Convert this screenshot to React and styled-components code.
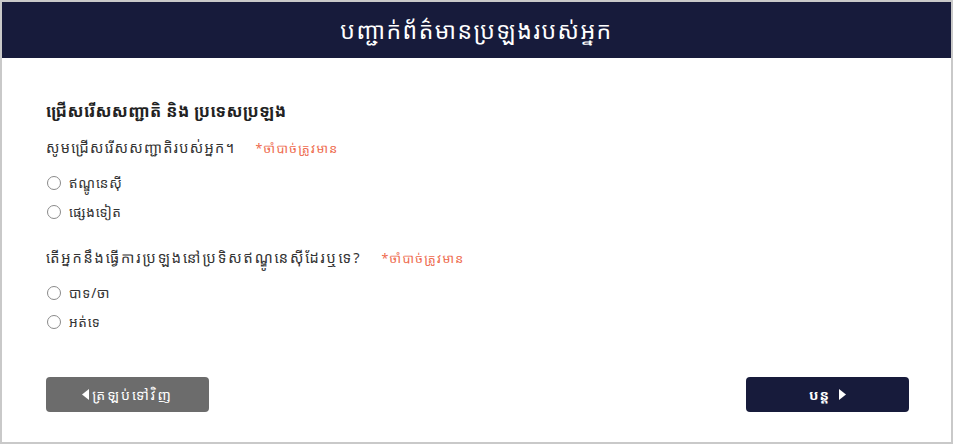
import React from "react";
import styled, { createGlobalStyle } from "styled-components";

const Global = createGlobalStyle`
  html, body { margin: 0; padding: 0; background: #c9c9c9; }
  body { font-family: "Noto Sans Khmer", "Khmer OS", "Noto Sans", "DejaVu Sans", sans-serif; }
  * { box-sizing: border-box; }
`;

const Frame = styled.div`
  width: 953px;
  height: 444px;
  padding: 2px;
  background: #c9c9c9;
`;

const Card = styled.div`
  height: 100%;
  background: #fff;
  display: flex;
  flex-direction: column;
`;

const Header = styled.header`
  height: 56px;
  background: #171b3b;
  color: #fff;
  display: flex;
  align-items: center;
  justify-content: center;
  font-size: 23px;
  letter-spacing: 1.5px;
  font-weight: 400;
`;

const Body = styled.main`
  flex: 1;
  padding: 38px 42px 0 44px;
  display: flex;
  flex-direction: column;
`;

const Heading = styled.h2`
  margin: 0 0 8px;
  font-size: 16.5px;
  letter-spacing: 0.4px;
  font-weight: 700;
  color: #222;
  line-height: 30px;
`;

const Question = styled.div`
  display: flex;
  align-items: baseline;
  gap: 20px;
  font-size: 14.5px;
  letter-spacing: ${(p) => p.$spacing || 1.3}px;
  color: #333;
  line-height: 26px;
  margin-top: ${(p) => p.$top || 0}px;
`;

const Required = styled.span`
  font-size: 12.5px;
  letter-spacing: 1.3px;
  color: #ee6a4d;
`;

const Options = styled.div`
  display: flex;
  flex-direction: column;
  gap: 5px;
  margin-top: 9px;
`;

const OptionRow = styled.label`
  display: flex;
  align-items: center;
  gap: 8px;
  font-size: 13.5px;
  letter-spacing: 0.8px;
  color: #333;
  line-height: 24px;
  padding-left: 1px;
`;

const Radio = styled.input.attrs({ type: "radio" })`
  appearance: none;
  margin: 0;
  width: 14px;
  height: 14px;
  border: 1px solid #8a8a8a;
  border-radius: 50%;
  background: #fff;
`;

const Actions = styled.div`
  display: flex;
  justify-content: space-between;
  margin-top: auto;
  margin-bottom: 30px;
`;

const Button = styled.button`
  width: 163px;
  height: 35px;
  border: none;
  border-radius: 4px;
  background: ${(p) => (p.$primary ? "#171b3b" : "#6c6c6c")};
  color: #fff;
  font-family: inherit;
  font-size: 14px;
  letter-spacing: ${(p) => (p.$primary ? "1px" : "2px")};
  font-weight: ${(p) => (p.$primary ? 700 : 400)};
  display: flex;
  align-items: center;
  justify-content: center;
  gap: ${(p) => (p.$primary ? "9px" : "3px")};
  cursor: pointer;
`;

const Tri = ({ dir }) => (
  <svg width="7" height="11" viewBox="0 0 7 11">
    {dir === "left" ? (
      <path d="M7 0 L0 5.5 L7 11 Z" fill="#fff" />
    ) : (
      <path d="M0 0 L7 5.5 L0 11 Z" fill="#fff" />
    )}
  </svg>
);

export default function App() {
  return (
    <>
      <Global />
      <Frame>
        <Card>
          <Header>បញ្ជាក់ព័ត៌មានប្រឡងរបស់អ្នក</Header>
          <Body>
            <Heading>ជ្រើសរើសសញ្ជាតិ និង ប្រទេសប្រឡង</Heading>
            <Question>
              <span>សូមជ្រើសរើសសញ្ជាតិរបស់អ្នក។</span>
              <Required>*ចាំបាច់ត្រូវមាន</Required>
            </Question>
            <Options>
              <OptionRow>
                <Radio name="nat" />
                ឥណ្ឌូនេស៊ី
              </OptionRow>
              <OptionRow>
                <Radio name="nat" />
                ផ្សេងទៀត
              </OptionRow>
            </Options>
            <Question $top={20} $spacing={1.9}>
              <span>តើអ្នកនឹងធ្វើការប្រឡងនៅប្រទិសឥណ្ឌូនេស៊ីដែរឬទេ?</span>
              <Required>*ចាំបាច់ត្រូវមាន</Required>
            </Question>
            <Options>
              <OptionRow>
                <Radio name="loc" />
                បាទ/ចា
              </OptionRow>
              <OptionRow>
                <Radio name="loc" />
                អត់ទេ
              </OptionRow>
            </Options>
            <Actions>
              <Button>
                <Tri dir="left" />
                ត្រឡប់ទៅវិញ
              </Button>
              <Button $primary>
                បន្ត
                <Tri dir="right" />
              </Button>
            </Actions>
          </Body>
        </Card>
      </Frame>
    </>
  );
}
